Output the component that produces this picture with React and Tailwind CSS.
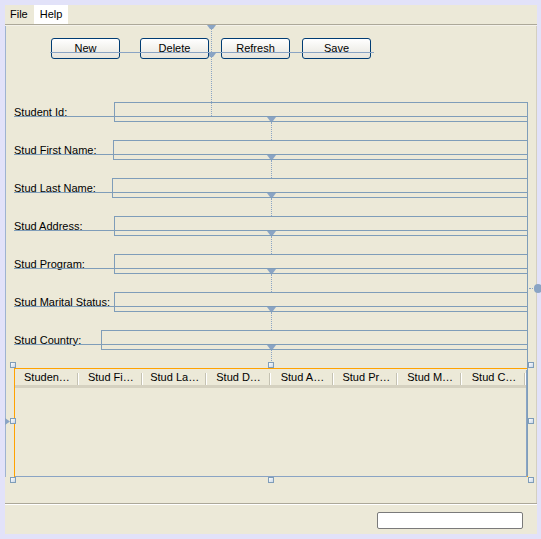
import React from 'react'

const font = { fontFamily: '"Liberation Sans", Arial, sans-serif' }

const fields = [
  { label: 'Student Id:', w: 'w-[100px]' },
  { label: 'Stud First Name:', w: 'w-[99px]' },
  { label: 'Stud Last Name:', w: 'w-[98px]' },
  { label: 'Stud Address:', w: 'w-[100px]' },
  { label: 'Stud Program:', w: 'w-[100px]' },
  { label: 'Stud Marital Status:', w: 'w-[100px]' },
  { label: 'Stud Country:', w: 'w-[87px]' },
]

const columns = ['Studen…', 'Stud Fi…', 'Stud La…', 'Stud D…', 'Stud A…', 'Stud Pr…', 'Stud M…', 'Stud C…']

function Marker({ className }) {
  return (
    <svg className={`absolute ${className}`} width="9" height="4" viewBox="0 0 9 4">
      <polygon points="0,0 9,0 6,4 3,4" fill="#8aa4c4" />
    </svg>
  )
}

function Handle({ className }) {
  return (
    <div className={`absolute w-[6px] h-[6px] border border-[#7f9db9] bg-gradient-to-br from-white to-[#c9d6e6] ${className}`} />
  )
}

function Btn({ children, className }) {
  return (
    <button className={`w-[69px] h-[21px] rounded-[3px] border border-[#003c74] bg-gradient-to-b from-white to-[#e6e4dc] text-[11px] text-black leading-none ${className}`}>
      {children}
    </button>
  )
}

export default function App() {
  return (
    <div className="w-[541px] h-[539px] bg-[#e2e2f9] pt-[5px] pl-[5px] pr-[4px] pb-[5px] text-black" style={font}>
      <div className="w-[532px] h-[529px] bg-[#ece9d8] flex flex-col">
        {/* menu bar */}
        <div className="h-[19px] flex items-center text-[11px]">
          <span className="pl-[5px] pr-[6px] h-full flex items-center">File</span>
          <span className="px-[6px] h-full flex items-center bg-white">Help</span>
        </div>
        <div className="h-px bg-[#aca899]" />
        <div className="h-px bg-[#f4f2ea]" />

        {/* design panel */}
        <div className="relative h-[477px] border-r border-[#d4d0c0] flex flex-col">
          {/* left edge guide */}
          <div className="absolute left-0 top-0 w-px h-[451px] bg-[#9fb3d0]" />
          {/* vertical guide from button row */}
          <Marker className="left-[202px] -top-[1px]" />
          <div className="absolute left-[206px] top-[3px] h-[87px] border-l border-dotted border-[#8aa4c4]" />
          <Marker className="left-[202px] top-[27px]" />

          <div className="relative flex items-center mt-[12px] ml-[46px] h-[21px]">
            <Btn>New</Btn>
            <Btn className="ml-[20px]">Delete</Btn>
            <Btn className="ml-[12px]">Refresh</Btn>
            <Btn className="ml-[12px]">Save</Btn>
            <div className="absolute -left-[1px] top-[14px] w-[324px] h-px bg-[#8aa4c4]" />
          </div>

          <div className="flex flex-col gap-[18px] mt-[43px] ml-[9px] w-[514px]">
            {fields.map((f, i) => (
              <div key={f.label} className="relative flex h-[20px] text-[11px]">
                <span className={`${f.w} shrink-0 pt-[5px] leading-[11px]`}>{f.label}</span>
                <div className="flex-1 border border-[#7f9db9]" />
                <div className="absolute left-0 right-0 top-[14px] h-px bg-[#7f9db9]" />
                <Marker className="left-[253px] top-[15px]" />
                <div className={`absolute left-[257px] top-[20px] ${i === fields.length - 1 ? 'h-[13px]' : 'h-[18px]'} border-l border-dotted border-[#8aa4c4]`} />
              </div>
            ))}
          </div>

          {/* table */}
          <div className="relative mt-[18px] ml-[9px] w-[514px] h-[109px] border border-[#ffa200]">
            <div className="w-full h-full border-r border-b border-[#8aa4c4]">
              <div className="flex h-[18px] mt-px">
                {columns.map((c) => (
                  <div key={c} className="relative w-[64px] h-full flex items-center justify-center text-[11px] border-b-[3px] border-[#d5d1c0]">
                    <span className="pb-[1px]">{c}</span>
                    <div className="absolute right-0 top-[3px] h-[12px] w-[2px] border-l border-[#c5c2b2] border-r border-r-white" />
                  </div>
                ))}
              </div>
            </div>
          </div>

          {/* selection handles */}
          <Handle className="left-[5px] top-[336px]" />
          <Handle className="left-[263px] top-[336px]" />
          <Handle className="left-[523px] top-[336px]" />
          <Handle className="left-[5px] top-[392px]" />
          <Handle className="left-[523px] top-[392px]" />
          <Handle className="left-[5px] top-[451px]" />
          <Handle className="left-[263px] top-[451px]" />
          <Handle className="left-[523px] top-[451px]" />
          <svg className="absolute left-0 top-[392px]" width="5" height="7" viewBox="0 0 5 7">
            <polygon points="0,0 5,3.5 0,7" fill="#8aa4c4" />
          </svg>

          {/* right edge guide */}
          <div className="absolute left-[522px] top-[76px] w-px h-[374px] bg-[#7f9db9]" />
          <div className="absolute left-[524px] top-[262px] w-[4px] border-t border-dotted border-[#8aa4c4]" />
          <div className="absolute left-[529px] top-[258px] w-[8px] h-[9px] rounded-full bg-[#8aa4c4]" />
        </div>

        <div className="h-px bg-[#aca899]" />
        <div className="h-px bg-white" />

        {/* status bar */}
        <div className="flex-1 flex items-start justify-end pr-[14px] pt-[7px]">
          <div className="w-[146px] h-[17px] rounded-[2px] border border-[#7a7a7a] bg-white" />
        </div>
      </div>
    </div>
  )
}
